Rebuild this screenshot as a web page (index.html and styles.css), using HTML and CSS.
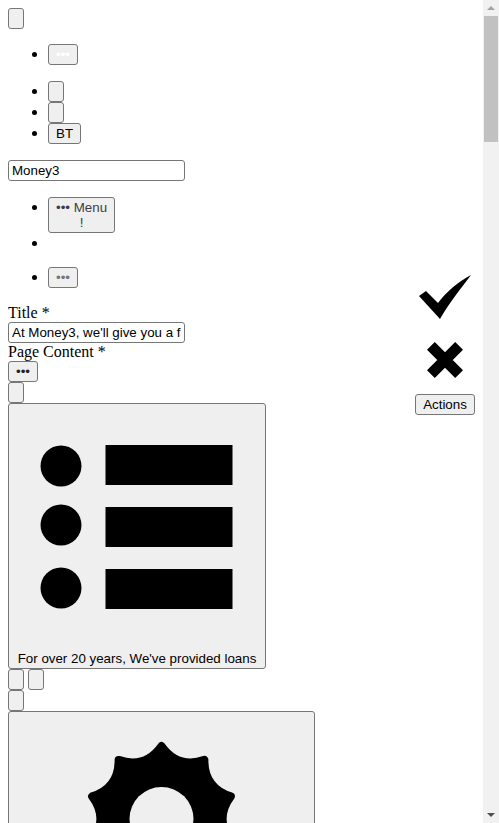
FILE: index.html
```html
<!DOCTYPE html>
<html lang="en">
<head>
    <meta charset="UTF-8">
    <meta name="viewport" content="width=device-width, initial-scale=1.0">
    <title>Page Content</title>
    <link rel="stylesheet" href="styles.css">
</head>
<body>
    <button type="button" class="btn-empty"></button>

    <ul class="toolbar toolbar-first">
        <li><button type="button" class="dots-white">•••</button></li>
    </ul>
    <ul class="toolbar">
        <li><button type="button" class="btn-empty"></button></li>
        <li><button type="button" class="btn-empty"></button></li>
        <li><button type="button">BT</button></li>
    </ul>

    <input type="text" class="text-input" value="Money3">

    <ul class="toolbar">
        <li><button type="button" class="menu-btn">••• Menu<br>!</button></li>
        <li class="empty-item"></li>
        <li><button type="button" class="dots-grey">•••</button></li>
    </ul>

    <aside class="actions">
        <svg width="52" height="45" viewBox="0 0 52 45">
            <path d="M0 21 L7 16 L19 28 C27 17 39 7 52 0 C43 12 30 28 21 44 Z"/>
        </svg>
        <svg class="icon-cross" width="36" height="36" viewBox="0 0 36 36">
            <path d="M3.9 3.9 L32.1 32.1 M32.1 3.9 L3.9 32.1" stroke="#000" stroke-width="11"/>
        </svg>
        <button type="button" class="actions-btn">Actions</button>
    </aside>

    <div class="field">
        <label for="title-input">Title *</label><br>
        <input type="text" id="title-input" class="text-input" value="At Money3, we'll give you a fast loan">
    </div>
    <div class="field">
        <label>Page Content *</label><br>
        <button type="button" class="dots-dark">•••</button><br>
        <button type="button" class="btn-empty"></button>
    </div>

    <button type="button" class="tile tile-list">
        <svg width="256" height="231" viewBox="0 1 256 231">
            <circle cx="52" cy="61" r="20.5"/>
            <circle cx="52" cy="120" r="20.5"/>
            <circle cx="52" cy="183" r="20.5"/>
            <rect x="96.5" y="40" width="127" height="40"/>
            <rect x="96.5" y="102" width="127" height="40"/>
            <rect x="96.5" y="164" width="127" height="40"/>
        </svg>
        <span class="tile-text">For over 20 years, We've provided loans</span>
    </button>
    <div class="tile-tools">
        <button type="button" class="btn-empty"></button>
        <button type="button" class="btn-empty"></button><br>
        <button type="button" class="btn-empty"></button>
    </div>

    <button type="button" class="tile tile-gear">
        <svg width="305" height="305" viewBox="-152.5 -107 305 305">
            <path class="gear" d="M0 -73 Q16.3 -50 42.9 -59.1 Q42.6 -30.9 69.4 -22.6 Q52.6 0 69.4 22.6 Q42.6 30.9 42.9 59.1 Q16.3 50 0 73 Q-16.3 50 -42.9 59.1 Q-42.6 30.9 -69.4 22.6 Q-52.6 0 -69.4 -22.6 Q-42.6 -30.9 -42.9 -59.1 Q-16.3 -50 0 -73 Z"/>
            <circle class="gear-hole" r="32"/>
        </svg>
    </button>

    <div class="page-rest"></div>

    <div class="scrollbar">
        <div class="scroll-end"><span class="arrow-up"></span></div>
        <div class="scroll-thumb"></div>
        <div class="scroll-track"></div>
        <div class="scroll-end"><span class="arrow-down"></span></div>
    </div>
</body>
</html>
```

FILE: styles.css
```css
body {
    margin: 8px;
    position: relative;
    font-family: "Liberation Serif", serif;
    font-size: 16px;
    color: #000;
}
button {
    font-family: "Liberation Sans", Arial, sans-serif;
    font-size: 13.333px;
    color: #000;
    background-color: #efefef;
    border: 1px solid #767676;
    border-radius: 3px;
    padding: 1px 7px;
    height: 21px;
    vertical-align: top;
}
.btn-empty {
    width: 16px;
}
.toolbar {
    margin: 16px 0;
    padding-left: 40px;
}
.toolbar-first {
    margin-top: 15px;
}
.toolbar li {
    min-height: 21px;
    line-height: 20px;
}
.toolbar .empty-item {
    min-height: 34px;
}
.dots-white {
    color: #fff;
}
.dots-grey {
    color: #767676;
}
.dots-dark {
    color: #222;
}
.menu-btn {
    height: 36px;
    line-height: 15px;
    color: #3c3c46;
}
.text-input {
    display: inline-block;
    box-sizing: border-box;
    width: 177px;
    height: 21px;
    padding: 1px 3px;
    border: 1px solid #767676;
    border-radius: 3px;
    font-family: "Liberation Sans", Arial, sans-serif;
    font-size: 13.333px;
    color: #000;
    vertical-align: top;
}
.field {
    line-height: 18px;
}
.actions {
    position: absolute;
    left: 407px;
    top: 267px;
    width: 60px;
    display: flex;
    flex-direction: column;
    align-items: center;
}
.icon-cross {
    margin-top: 22px;
}
.actions-btn {
    margin-top: 16px;
    width: 60px;
    padding: 1px 0;
}
.tile {
    display: block;
    box-sizing: border-box;
    padding: 0;
    height: auto;
    border-radius: 3px;
}
.tile svg {
    display: block;
    margin: 0 auto;
}
.tile-list {
    width: 258px;
    height: 266px;
}
.tile-text {
    display: block;
    margin-top: 14px;
    line-height: 15px;
}
.tile-tools {
    line-height: 0;
}
.tile-gear {
    width: 307px;
}
.gear {
    stroke: #000;
    stroke-width: 8;
    stroke-linejoin: round;
}
.gear-hole {
    fill: #efefef;
}
.page-rest {
    height: 4100px;
}
.scrollbar {
    position: fixed;
    top: 0;
    right: 0;
    bottom: 0;
    width: 16px;
    display: flex;
    flex-direction: column;
    background-color: #f1f1f1;
}
.scroll-end {
    height: 16px;
    display: flex;
    align-items: center;
    justify-content: center;
}
.scroll-thumb {
    height: 126px;
    margin: 0 1px;
    background-color: #c1c1c1;
}
.scroll-track {
    flex: 1;
}
.arrow-up {
    border-left: 4px solid transparent;
    border-right: 4px solid transparent;
    border-bottom: 4px solid #a3a3a3;
}
.arrow-down {
    border-left: 4px solid transparent;
    border-right: 4px solid transparent;
    border-top: 4px solid #505050;
}
```
